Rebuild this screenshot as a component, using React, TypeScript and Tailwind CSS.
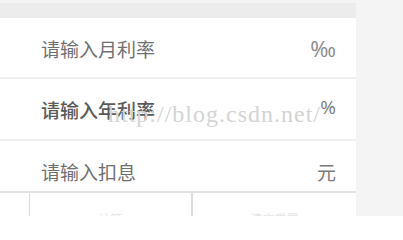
import React from "react";

const cjk = { fontFamily: '"Noto Sans CJK SC", "Noto Sans", sans-serif' };

export default function App() {
  return (
    <div className="w-[403px] h-[216px] overflow-hidden bg-[#f4f4f4] flex" style={cjk}>
      <div className="w-[356px] h-[216px] flex flex-col bg-white relative overflow-hidden">
        <div className="h-[3px] shrink-0 bg-[#f4f4f4]" />
        <div className="h-[15px] shrink-0 bg-[#ececec]" />
        <div className="h-[61px] shrink-0 flex items-center justify-between pl-[41px] pr-[20px] border-b-2 border-[#efefef]">
          <span className="text-[19px] text-[#707070] leading-none pt-[1px]">请输入月利率</span>
          <span className="text-[22px] text-[#8a8a8a] leading-none" style={{ fontFamily: '"Open Sans", sans-serif' }}>‰</span>
        </div>
        <div className="h-[62px] shrink-0 flex items-center justify-between pl-[41px] pr-[20px] border-b-2 border-[#efefef]">
          <span className="text-[19px] text-[#5a5a5a] leading-none font-medium">请输入年利率</span>
          <span className="text-[19px] text-[#7a7a7a] leading-none mb-[4px]" style={{ fontFamily: '"Open Sans", sans-serif' }}>%</span>
        </div>
        <div className="h-[52px] shrink-0 flex items-start justify-between pl-[41px] pr-[20px] pt-[21px] border-b-2 border-[#e2e2e2]">
          <span className="text-[19px] text-[#707070] leading-none">请输入扣息</span>
          <span className="text-[19px] text-[#7a7a7a] leading-none">元</span>
        </div>
        <div className="h-[60px] shrink-0 flex">
          <div className="w-[30px] border-r border-[#dcdcdc]" />
          <div className="w-[163px] border-r-2 border-[#dcdcdc] flex justify-center pt-[20px]">
            <span className="text-[12px] leading-none text-[#e6e6e6]">计算</span>
          </div>
          <div className="flex-1 flex justify-center pt-[20px]">
            <span className="text-[12px] leading-none text-[#e6e6e6]">清空重置</span>
          </div>
        </div>
        <div
          className="absolute left-[108px] top-[102px] text-[24px] text-[#d4d4d4] leading-none tracking-[1px] pointer-events-none"
          style={{ fontFamily: '"Liberation Serif", "DejaVu Serif", serif' }}
        >
          http://blog.csdn.net/
        </div>
      </div>
      <div className="flex-1" />
    </div>
  );
}
